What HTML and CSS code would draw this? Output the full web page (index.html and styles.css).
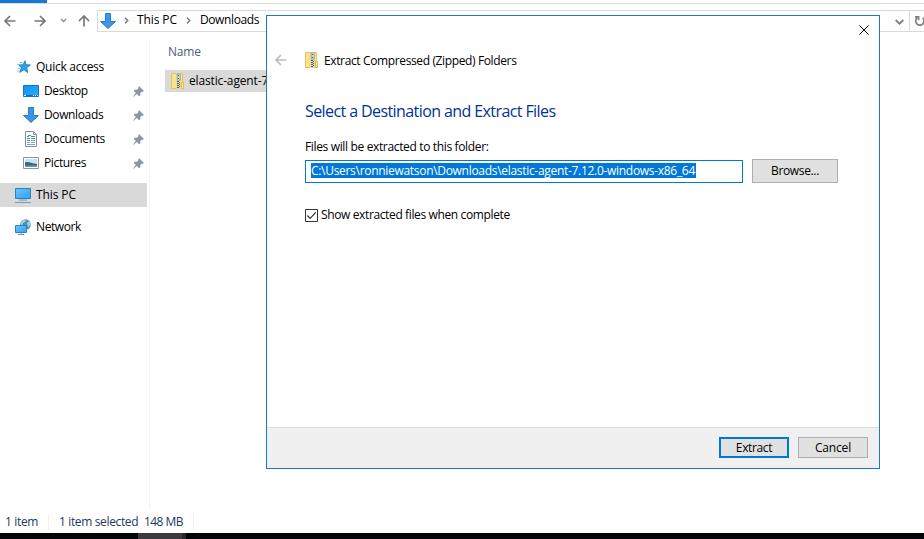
FILE: index.html
```html
<!DOCTYPE html>
<html lang="en">
<head>
<meta charset="utf-8">
<title>Downloads</title>
<link rel="stylesheet" href="styles.css">
</head>
<body>
<svg class="defs" width="0" height="0">
  <defs>
    <linearGradient id="screen" x1="0" y1="0" x2="1" y2="1"><stop offset="0" stop-color="#6cc5fc"/><stop offset="1" stop-color="#2aa3f2"/></linearGradient>
    <linearGradient id="desk" x1="0" y1="0" x2="1" y2="1"><stop offset="0" stop-color="#1193f8"/><stop offset="1" stop-color="#25adff"/></linearGradient>
    <symbol id="down" viewBox="0 0 16 16"><path d="M5.5.5h5v8h5L8 15.5.5 8.500h5z" fill="#3c96e6" stroke="#2a7ecb"/></symbol>
    <symbol id="pin" viewBox="0 0 11 11"><path d="M6.200.2 10.800 4.800 9.800 5.900 8.800 5.800 7.200 7.500v2L6 10.200 3.900 8.100.7 10.800l-.5-.5 2.700-3.200L.8 5l.7-1.200h2.200L5.400 2.200 5.200 1.200z" fill="#8b98a4"/></symbol>
    <symbol id="zip" viewBox="0 0 13 16"><path d="M.5.5h11v10h1v5H.5z" fill="#fde28c" stroke="#e8c450"/><path d="M10.500 9.500h2v6h-2z" fill="#ffe99f" stroke="#e5bd3e"/><path d="M5 0h5v16H5z" fill="#ddd9b0"/><path d="M6.300.8h2.900v6.400H6.300z" fill="#d5d8da" stroke="#8c8f91" stroke-width=".7"/><path d="M7 2h1v1H7zM7 5h1v1H7zM6 8h2v1H6zM8 9h1v1H8zM6 10h2v1H6zM8 11h1v1H8zM6 12h2v1H6zM8 13h1v1H8zM6 14h2v1H6z" fill="#5b6066"/></symbol>
    <symbol id="arrow" viewBox="0 0 12 12"><path d="M11.500 6H1M6 1 1 6l5 5" fill="none" stroke="currentColor" stroke-width="1.700"/></symbol>
    <symbol id="chev" viewBox="0 0 5 7"><path d="M1 .7 3.800 3.500 1 6.300" fill="none" stroke="#777" stroke-width="1.400"/></symbol>
  </defs>
</svg>
<div class="explorer">
  <div class="ribbon"><div class="file-tab"></div></div>
  <div class="toolbar">
    <svg class="nav back"><use href="#arrow"/></svg>
    <svg class="nav fwd"><use href="#arrow"/></svg>
    <svg class="recent" viewBox="0 0 7 5"><path d="M1 1l2.500 2.500L6 1" fill="none" stroke="#888" stroke-width="1.400"/></svg>
    <svg class="nav up"><use href="#arrow"/></svg>
    <div class="address">
      <svg class="addr-icon"><use href="#down"/></svg>
      <svg class="crumb-chev"><use href="#chev"/></svg>
      <span class="crumb pc">This PC</span>
      <svg class="crumb-chev"><use href="#chev"/></svg>
      <span class="crumb dl">Downloads</span>
      <svg class="drop" viewBox="0 0 9 6"><path d="M.7 1l3.800 3.700L8.300 1" fill="none" stroke="#808080" stroke-width="1.900"/></svg>
      <div class="refresh"><svg viewBox="0 0 12 12"><path d="M8.800 2.800A4.200 4.200 0 1 1 3 2.800M1 1.800h3.600v3.500" fill="none" stroke="#808080" stroke-width="1.700"/></svg></div>
    </div>
  </div>
  <div class="main">
    <div class="sidebar">
      <div class="item top"><svg class="ic star" viewBox="0 0 16 16"><path d="M10 1.800l1 4 4.400.1-3.700 2.700 1 5-3.700-2.900-4.200 2.700 1.600-4.700-2.700-2.600 4.300-.3z" fill="#2ba2ea" stroke="#1d81bd" stroke-width=".9"/><path d="M4.500 3.500h3M2.500 5.500h2M3 9.500h2M2 12h2.500" stroke="#50afe4" stroke-opacity=".7"/></svg><span class="quick">Quick access</span></div>
      <div class="item"><svg class="ic" viewBox="0 0 16 16"><path d="M.5 2.500h15v11H.5z" fill="url(#desk)" stroke="#1377bd"/><path d="M1 12.500h14" stroke="#0d6bad"/><path d="M1 12.500h2M10 12.500h1M12 12.500h1M14 12.500h1" stroke="#fff"/></svg><span class="desktop">Desktop</span><svg class="pin"><use href="#pin"/></svg></div>
      <div class="item"><svg class="ic"><use href="#down"/></svg><span class="downloads">Downloads</span><svg class="pin"><use href="#pin"/></svg></div>
      <div class="item"><svg class="ic" viewBox="0 0 16 16"><path d="M2.500.5h8l3 3v12h-11z" fill="#fff" stroke="#8b8f92"/><path d="M10.500.5v3h3" fill="none" stroke="#8b8f92"/><path d="M4 5.500h2M4 7.500h3M8 5.500h4M8 7.500h4M4 9.500h3" stroke="#3693c9"/><path d="M8 9.500h4M4 11.500h3M8 11.500h4M4 13.500h8" stroke="#7da5bd"/><path d="M5 4.500h3" stroke="#2ba2dc"/></svg><span class="documents">Documents</span><svg class="pin"><use href="#pin"/></svg></div>
      <div class="item"><svg class="ic" viewBox="0 0 16 16"><path d="M.5 2.500h15v11H.5z" fill="#fff" stroke="#929292"/><path d="M2 4h12v8H2z" fill="#c5e3f3"/><path d="M2 7.500c3-1.500 6 1 12 1.500v2H2z" fill="#3e6873"/><path d="M2 10.500h12V12H2z" fill="#5a9ccd"/></svg><span class="pictures">Pictures</span><svg class="pin"><use href="#pin"/></svg></div>
      <div class="item top spaced selected"><svg class="ic" viewBox="0 0 16 16"><path d="M.5 1.500h15v10H.5z" fill="url(#screen)" stroke="#337fae"/><path d="M4 13h8" stroke="#6d9bb8"/><path d="M0 15.500h16" stroke="#7c9bb6"/></svg><span class="thispc">This PC</span></div>
      <div class="item top spaced"><svg class="ic" viewBox="0 0 16 16"><circle cx="10.500" cy="5.500" r="5.300" fill="#4a91b5"/><path d="M6 3q3-3 5-2l-1 2-2 1-1 3-1-1zM12 4l2-2q2 2 1.500 4L13 8z" fill="#a6d0dc"/><path d="M.5 6.500h11v7H.5z" fill="url(#screen)" stroke="#3283b1"/><path d="M3 15.500h6M6 14v1" stroke="#7695aa"/></svg><span class="network">Network</span></div>
    </div>
    <div class="files">
      <div class="heading">Name</div>
      <div class="file"><svg class="zip"><use href="#zip"/></svg><span>elastic-agent-7.12.0-windows-x86_64</span></div>
    </div>
  </div>
  <div class="status"><span class="count">1 item</span><span class="chosen">1 item selected</span><span class="size">148 MB</span></div>
  <div class="taskbar"><div class="task"></div></div>
</div>

<div class="dialog">
  <div class="caption"><svg class="close" viewBox="0 0 11 11"><path d="M.5.5l10 10M10.500.5l-10 10" stroke="#000" stroke-width="1.100"/></svg></div>
  <div class="wizard"><svg class="wizard-back"><use href="#arrow"/></svg><svg class="zip"><use href="#zip"/></svg><span class="wizard-name">Extract Compressed (Zipped) Folders</span></div>
  <div class="body">
    <div class="title"><span>Select a Destination and Extract Files</span></div>
    <div class="label"><span>Files will be extracted to this folder:</span></div>
    <div class="row"><div class="input"><span class="sel">C:\Users\ronniewatson\Downloads\elastic-agent-7.12.0-windows-x86_64</span></div><div class="button browse"><span>Browse...</span></div></div>
    <div class="check"><svg class="box" viewBox="0 0 13 13"><path d="M.5.5h12v12H.5z" fill="#fff" stroke="#333"/><path d="M2.300 6.500l2.800 2.800 5.700-6" fill="none" stroke="#333" stroke-width="1.200"/></svg><span>Show extracted files when complete</span></div>
  </div>
  <div class="footer"><div class="button primary"><span>Extract</span></div><div class="button cancel"><span>Cancel</span></div></div>
</div>
</body>
</html>
```
FILE: styles.css
```css
* { box-sizing: border-box; }
body { margin: 0; width: 924px; height: 539px; overflow: hidden; background: #fff; color: #000; font: 12px/16px "Open Sans", "Noto Sans", sans-serif; letter-spacing: -0.37px; white-space: nowrap; }
svg { display: block; flex: none; }
.defs { position: absolute; }
.explorer { display: flex; flex-direction: column; height: 539px; }
.ribbon { height: 4px; border-bottom: 1px solid #dadbdc; flex: none; }
.file-tab { width: 47px; height: 3px; background: #1979ca; }
.toolbar { display: flex; align-items: center; height: 35px; flex: none; padding-left: 4px; color: #777; }
.nav { width: 12px; height: 12px; margin-top: -1px; }
.fwd { transform: scaleX(-1); margin-left: 18px; }
.recent { width: 7px; height: 5px; margin: -2px 11px 0 14px; }
.up { transform: rotate(90deg); }
.address { display: flex; align-items: center; width: 840px; height: 22px; margin-left: 7px; border: 1px solid #d9d9d9; flex: none; color: #000; margin-top: -1px; }
.addr-icon { width: 16px; height: 16px; margin: -1px 8px 0 2px; }
.crumb-chev { width: 5px; height: 7px; margin-top: -1px; }
.pc { width: 40px; margin: -2px 9px 0 8px; letter-spacing: -0.1px; }
.dl { margin: -2px 0 0 9px; width: 60px; }
.drop { width: 9px; height: 6px; margin: 2px 5px 0 636px; }
.refresh { width: 29px; height: 20px; border-left: 1px solid #d9d9d9; padding: 4px 0 0 4px; }
.refresh svg { width: 12px; height: 12px; }
.main { display: flex; height: 470px; flex: none; }
.sidebar { width: 150px; padding-top: 16px; border-right: 1px solid #f3f3f3; }
.item { display: flex; align-items: center; width: 147px; height: 24px; padding-left: 23px; }
.item.top { padding-left: 15px; }
.item.spaced { margin-top: 8px; }
.selected { background: #d9d9d9; }
.ic { width: 16px; height: 16px; margin-right: 5px; }
.quick { letter-spacing: -0.27px; }
.thispc { letter-spacing: -0.1px; }
.network { letter-spacing: -0.4px; }
.pin { width: 11px; height: 11px; margin: 0 3px 0 auto; }
.files { padding-left: 15px; }
.heading { height: 31px; padding: 5px 3px; color: #4c607a; letter-spacing: -0.2px; }
.file { display: flex; align-items: center; width: 400px; height: 22px; padding-left: 6px; background: #d9d9d9; letter-spacing: -0.15px; }
.zip { width: 13px; height: 16px; margin-right: 5px; }
.status { display: flex; align-items: center; height: 24px; flex: none; padding: 2px 0 0 5px; color: #1e395b; }
.count { width: 44px; border-right: 1px solid #f1f1f1; letter-spacing: -0.35px; }
.chosen { width: 85px; margin-left: 10px; letter-spacing: -0.36px; }
.size { width: 50px; border-right: 1px solid #f1f1f1; letter-spacing: -0.55px; }
.taskbar { height: 6px; background: #030509; padding-left: 138px; }
.task { width: 48px; height: 6px; background: #3b393d; border-right: 4px solid #29282c; }
.dialog { position: absolute; left: 266px; top: 15px; width: 614px; height: 454px; display: flex; flex-direction: column; background: #fff; border: 1px solid #1979ca; }
.caption { display: flex; justify-content: flex-end; height: 33px; padding: 9px 10px 0 0; }
.close { width: 10px; height: 10px; }
.wizard { display: flex; align-items: center; height: 24px; padding-left: 8px; margin-top: -1px; }
.wizard-back { width: 12px; height: 12px; margin-right: 18px; color: #bcbcbc; }
.wizard-name { margin: 2px 0 0 1px; }
.body { padding: 27px 0 0 38px; flex: 1; }
.title { height: 24px; color: #003399; font-size: 16px; line-height: 24px; letter-spacing: -0.59px; }
.label { height: 16px; margin-top: 16px; letter-spacing: -0.35px; }
.row { display: flex; margin-top: 4px; }
.input { width: 438px; height: 23px; margin-top: 1px; padding: 2px 5px; border: 1px solid #0078d7; display: flex; }
.sel { display: block; width: 385px; height: 15px; line-height: 15px; background: #0078d7; color: #fff; letter-spacing: -0.3px; }
.button { display: flex; align-items: center; justify-content: center; background: #e1e1e1; border: 1px solid #adadad; width: 70px; height: 21px; letter-spacing: -0.35px; }
.browse { width: 86px; height: 24px; margin-left: 9px; }
.check { display: flex; align-items: center; margin-top: 24px; height: 16px; }
.box { width: 13px; height: 13px; margin-right: 3px; }
.footer { display: flex; gap: 9px; justify-content: flex-end; height: 41px; padding: 9px 11px 0 0; background: #f0f0f0; border-top: 1px solid #dfdfdf; }
.cancel { letter-spacing: -0.15px; }
.primary { border: 2px solid #0078d7; }
```
